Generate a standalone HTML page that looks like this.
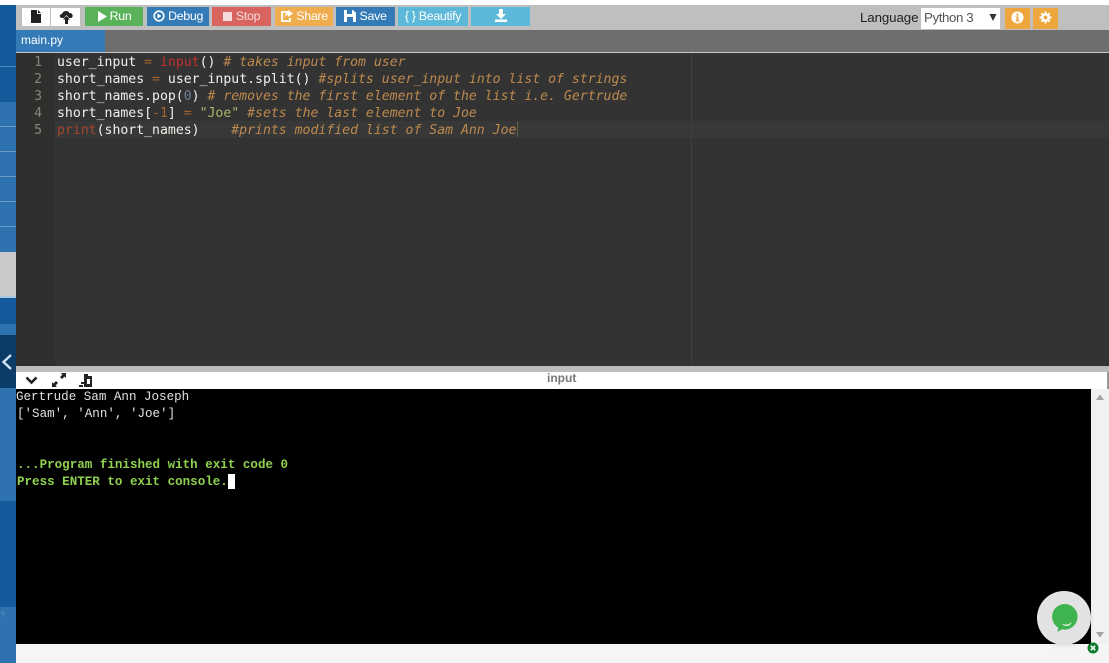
<!DOCTYPE html>
<html><head><meta charset="utf-8">
<style>
html,body{margin:0;padding:0;background:#fff;}
#p{position:relative;width:1109px;height:663px;overflow:hidden;background:#fff;font-family:"Liberation Sans",sans-serif;}
.a{position:absolute;}
.b{position:absolute;top:7px;height:19px;color:#fff;font-size:12.4px;line-height:19px;text-align:center;white-space:nowrap;letter-spacing:-.3px;box-sizing:border-box;}
.b svg{vertical-align:-1.5px;}
.l{position:absolute;left:57px;height:17px;line-height:17px;font-family:"DejaVu Sans Mono",monospace;font-size:13.17px;color:#f0f0ea;white-space:pre;}
.n{position:absolute;left:16px;width:26px;height:17px;line-height:17px;text-align:right;font-family:"DejaVu Sans Mono",monospace;font-size:13.17px;color:#85867f;}
.c{color:#bd8a4e;font-style:italic;}
.o{color:#a5652c;}
.f{color:#c2302f;}
.d{color:#6f7f90;}
.s{color:#a8b56a;}
.t{position:absolute;left:17px;height:17px;line-height:17px;font-family:"Liberation Mono",monospace;font-size:12.55px;white-space:pre;color:#e0e0e0;}
.g{color:#8fd14f;font-weight:bold;}
</style></head><body>
<div id="p">
<!-- sidebar -->
<div class="a" style="left:0;top:5px;width:16px;height:658px;background:#125a9a;"></div>
<div class="a" style="left:0;top:102px;width:16px;height:150px;background:#2f72b0;"></div>
<div class="a" style="left:0;top:66px;width:16px;height:1px;background:#4f8cc4;"></div>
<div class="a" style="left:0;top:126px;width:16px;height:1px;background:#6a9ccb;"></div>
<div class="a" style="left:0;top:151px;width:16px;height:1px;background:#6a9ccb;"></div>
<div class="a" style="left:0;top:176px;width:16px;height:1px;background:#6a9ccb;"></div>
<div class="a" style="left:0;top:201px;width:16px;height:1px;background:#6a9ccb;"></div>
<div class="a" style="left:0;top:226px;width:16px;height:1px;background:#6a9ccb;"></div>
<div class="a" style="left:0;top:252px;width:16px;height:46px;background:#c9c9c9;"></div>
<div class="a" style="left:0;top:296px;width:16px;height:2px;background:#a9c6e2;"></div>
<div class="a" style="left:0;top:324px;width:16px;height:11px;background:#2f72b0;"></div>
<div class="a" style="left:0;top:335px;width:16px;height:53px;background:#0d3b68;"></div>
<svg class="a" style="left:0;top:353px" width="16" height="18"><path d="M11 2 L3.500 9 L11 16" fill="none" stroke="#cfe3f5" stroke-width="2.400"/></svg>
<div class="a" style="left:0;top:388px;width:16px;height:113px;background:#2f72b0;"></div>
<div class="a" style="left:0;top:607px;width:16px;height:56px;background:#2f72b0;"></div>
<div class="a" style="left:0;top:611px;width:5px;height:9px;color:#5a90c4;font-size:9px;line-height:9px;">?</div>

<!-- toolbar -->
<div class="a" style="left:16px;top:5px;width:1093px;height:25px;background:#bfbfbf;"></div>
<div class="a" style="left:16px;top:30px;width:1093px;height:22px;background:#6e6e6e;"></div>
<div class="a" style="left:16px;top:52px;width:1093px;height:1px;background:#c8c8c8;"></div>
<div class="a" style="left:16px;top:30px;width:89px;height:22px;background:#337ab7;color:#fff;font-size:12px;line-height:21px;padding-left:5px;box-sizing:border-box;">main.py</div>

<div class="a" style="left:22px;top:8px;width:28px;height:18px;background:#fff;"></div>
<div class="a" style="left:51px;top:8px;width:29px;height:18px;background:#fff;"></div>
<svg class="a" style="left:30px;top:10px" width="12" height="13"><path d="M1 0H7V4H11V13H1Z M8 0L11 3H8Z" fill="#222"/></svg>
<svg class="a" style="left:59px;top:10px" width="15" height="14"><path d="M3.500 8C0 8 0 4 3 4C4 .5 9 0 10.500 3C14 2.500 15 8 11.500 8H10L7.500 5L5 8Z" fill="#222"/><path d="M7.500 6L11 9.500H9V14H6V9.500H4Z" fill="#222"/></svg>

<div class="b" style="left:85px;width:58px;background:#59b25a;"><svg width="10" height="11"><path d="M1 0L10 5.500L1 11Z" fill="#fff"/></svg> Run</div>
<div class="b" style="left:147px;width:62px;background:#337ab7;"><svg width="12" height="12"><circle cx="6" cy="6" r="4.800" fill="none" stroke="#fff" stroke-width="1.600"/><path d="M4.500 3.500L8.500 6L4.500 8.500Z" fill="#fff"/></svg> Debug</div>
<div class="b" style="left:212px;width:59px;background:#d9645f;color:#f3dcdb;"><svg width="10" height="10" style="vertical-align:-1px"><rect width="9" height="9" y="1" fill="#f3dcdb"/></svg> Stop</div>
<div class="b" style="left:275px;width:58px;background:#f0ad4e;"><svg width="13" height="12"><path d="M8 2H2V11H10V8" fill="none" stroke="#fff" stroke-width="1.800"/><path d="M8 0L13 3.500L8 7V5C6 5 5 6 4.500 8C4.500 5 6 2.500 8 2.500Z" fill="#fff"/></svg> Share</div>
<div class="b" style="left:336px;width:59px;background:#337ab7;"><svg width="12" height="12"><path d="M0 0H9L12 3V12H0Z" fill="#fff"/><rect x="3" y="0" width="5" height="4" fill="#337ab7"/><rect x="3" y="7" width="6" height="5" fill="#337ab7"/></svg> Save</div>
<div class="b" style="left:398px;width:70px;background:#5bb8d8;">{ } Beautify</div>
<div class="b" style="left:471px;width:59px;background:#5bb8d8;"><svg width="14" height="13" style="vertical-align:-2px"><path d="M5 0H9V5H12L7 10L2 5H5Z" fill="#fff"/><rect x="1" y="10.500" width="12" height="2.500" fill="#fff"/></svg></div>

<div class="a" style="left:860px;top:9px;font-size:13.300px;line-height:18px;color:#222;letter-spacing:-.1px;">Language</div>
<div class="a" style="left:921px;top:8px;width:79px;height:21px;background:#fff;color:#555;font-size:13.300px;line-height:20px;padding-left:3px;box-sizing:border-box;letter-spacing:-.4px;">Python 3</div>
<svg class="a" style="left:989px;top:14px" width="8" height="7"><path d="M.5 0H7.500L4 7Z" fill="#333"/></svg>
<div class="a" style="left:1005px;top:8px;width:25px;height:21px;background:#eea73e;"></div>
<div class="a" style="left:1033px;top:8px;width:25px;height:21px;background:#eea73e;"></div>
<svg class="a" style="left:1011px;top:11px" width="13" height="13"><circle cx="6.500" cy="6.500" r="6" fill="#fff"/><rect x="5.500" y="2.500" width="2" height="2" fill="#eea73e"/><path d="M4.500 5.500H7.500V9.500H8.500V10.500H4.500V9.500H5.500V6.500H4.500Z" fill="#eea73e"/></svg>
<svg class="a" style="left:1039px;top:11px" width="13" height="13"><path d="M6.500 .5V12.500M.5 6.500H12.500M2.300 2.300L10.700 10.700M10.700 2.300L2.300 10.700" stroke="#fff" stroke-width="2"/><circle cx="6.500" cy="6.500" r="4.300" fill="#fff"/><circle cx="6.500" cy="6.500" r="1.900" fill="#eea73e"/></svg>

<!-- editor -->
<div class="a" style="left:16px;top:53px;width:1093px;height:313px;background:#333333;"></div>
<div class="a" style="left:16px;top:53px;width:39px;height:313px;background:#2f2f2d;"></div>
<div class="a" style="left:55px;top:121px;width:1054px;height:17px;background:#383838;"></div>
<div class="a" style="left:691px;top:53px;width:1px;height:313px;background:#3f3f3f;"></div>

<div class="n" style="top:54px">1</div>
<div class="n" style="top:71px">2</div>
<div class="n" style="top:88px">3</div>
<div class="n" style="top:105px">4</div>
<div class="n" style="top:122px">5</div>
<div class="l" style="top:54px">user_input <span class="o">=</span> <span class="f">input</span>() <span class="c"># takes input from user</span></div>
<div class="l" style="top:71px">short_names <span class="o">=</span> user_input.split() <span class="c">#splits user_input into list of strings</span></div>
<div class="l" style="top:88px">short_names.pop(<span class="d">0</span>) <span class="c"># removes the first element of the list i.e. Gertrude</span></div>
<div class="l" style="top:105px">short_names[<span class="o">-1</span>] <span class="o">=</span> <span class="s">"Joe"</span> <span class="c">#sets the last element to Joe</span></div>
<div class="l" style="top:122px"><span class="f" style="color:#a5452c">print</span>(short_names)    <span class="c">#prints modified list of Sam Ann Joe</span></div>
<div class="a" style="left:517px;top:122px;width:1px;height:15px;background:#5a6a45;"></div>

<!-- io header -->
<div class="a" style="left:16px;top:366px;width:1093px;height:6px;background:#bdbdbd;"></div>
<div class="a" style="left:16px;top:372px;width:1091px;height:17px;background:#fff;"></div>
<div class="a" style="left:1107px;top:372px;width:2px;height:17px;background:#999;"></div>
<div class="a" style="left:547px;top:370px;font-size:12px;line-height:16px;font-weight:bold;color:#777;">input</div>
<svg class="a" style="left:25px;top:376px" width="13" height="9"><path d="M1.500 1.500L6.500 6.500L11.500 1.500" fill="none" stroke="#222" stroke-width="2.600"/></svg>
<svg class="a" style="left:51px;top:372px" width="16" height="16"><path d="M10 1H15V6L13.500 4.500L11 7L9 5L11.500 2.500Z M1 15V10L2.500 11.500L5 9L7 11L4.500 13.500L6 15Z" fill="#222"/></svg>
<svg class="a" style="left:79px;top:373px" width="15" height="15"><path d="M5 1H9V3H13V14H5V11H2V9H5Z" fill="#222"/><rect x="8" y="6" width="3" height="5" fill="#fff"/><path d="M0 12H4V14H0Z" fill="#222"/></svg>

<!-- console -->
<div class="a" style="left:16px;top:389px;width:1075px;height:255px;background:#000;"></div>
<div class="t" style="top:389px;left:16px">Gertrude Sam Ann Joseph</div>
<div class="t" style="top:406px">['Sam', 'Ann', 'Joe']</div>
<div class="t g" style="top:457px">...Program finished with exit code 0</div>
<div class="t g" style="top:474px">Press ENTER to exit console.</div>
<div class="a" style="left:228px;top:474px;width:7px;height:15px;background:#fff;"></div>

<!-- scrollbar -->
<div class="a" style="left:1091px;top:389px;width:18px;height:255px;background:#f1f1f1;"></div>
<svg class="a" style="left:1095px;top:394px" width="10" height="7"><path d="M5 .5L9 6H1Z" fill="#a3a3a3"/></svg>
<svg class="a" style="left:1095px;top:631px" width="10" height="7"><path d="M1 1H9L5 6.500Z" fill="#a3a3a3"/></svg>
<div class="a" style="left:16px;top:644px;width:1093px;height:19px;background:#f5f5f5;"></div>

<!-- chat -->
<div class="a" style="left:1037px;top:591px;width:54px;height:54px;border-radius:50%;background:#e2e2e2;box-shadow:0 1px 5px rgba(0,0,0,.12);"></div>
<svg class="a" style="left:1051px;top:604px" width="27" height="28"><path d="M13.500 0A12.800 12.800 0 1 1 11 25.300C9.500 26.500 8 27.500 6 27.500C7 26.300 7.500 25 7.200 23.700A12.800 12.800 0 0 1 13.500 0Z" fill="#3fb34f"/><path d="M11 19.500C14 21.300 18 21 20.500 18C20 22.500 13 23.500 11 19.500Z" fill="#e6f5e6"/></svg>
<svg class="a" style="left:1087px;top:642px" width="12" height="12"><circle cx="6" cy="6" r="5.500" fill="#0a7a2a"/><path d="M3.800 3.800L8.200 8.200M8.200 3.800L3.800 8.200" stroke="#e8f5e8" stroke-width="1.800"/></svg>
</div>
</body></html>
